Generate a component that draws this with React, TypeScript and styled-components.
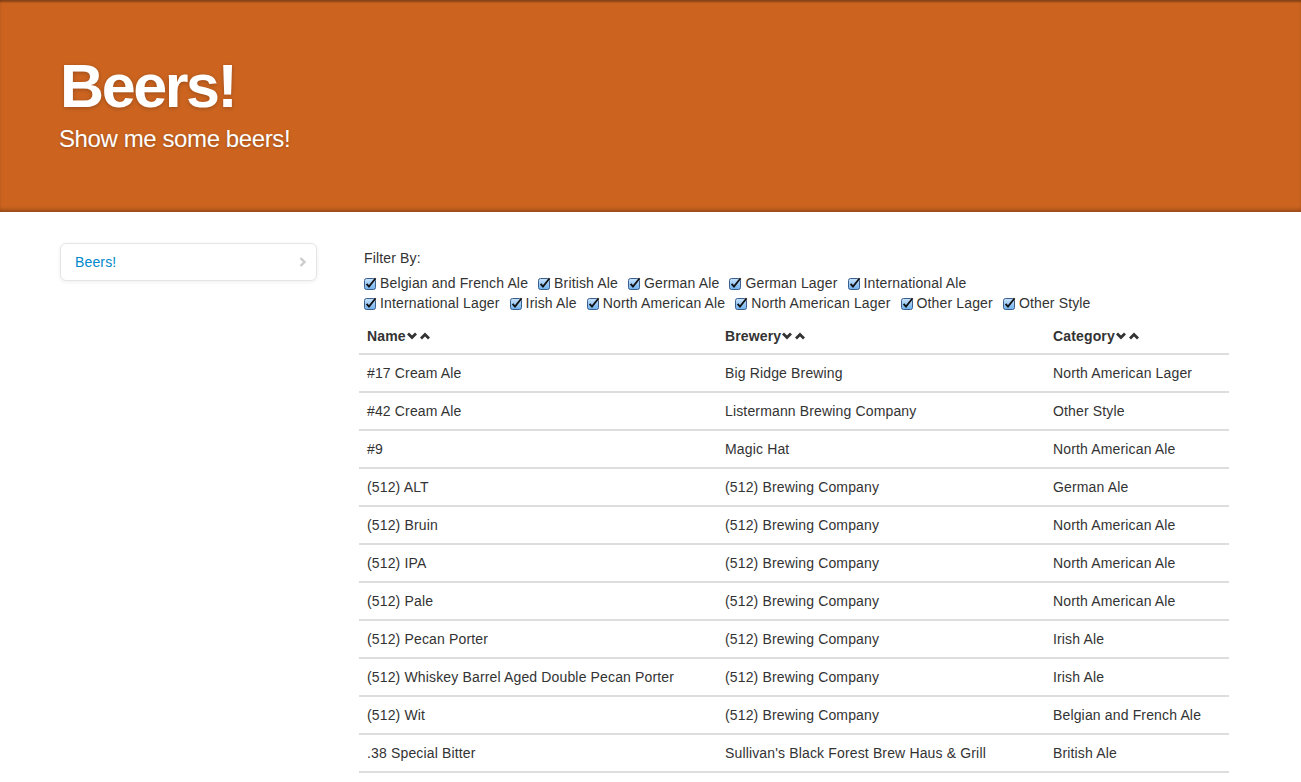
import styled, { createGlobalStyle } from "styled-components";

const GlobalStyle = createGlobalStyle`
  html, body {
    margin: 0;
    padding: 0;
    background: #fff;
  }
  body {
    font-family: "Liberation Sans", Arial, sans-serif;
    font-size: 14px;
    line-height: 20px;
    letter-spacing: 0.15px;
    color: #333;
  }
`;

const Hero = styled.header`
  height: 212px;
  box-sizing: border-box;
  background: #cc6420;
  box-shadow: inset 0 3px 2px -1px rgba(0, 0, 0, 0.35), inset 0 -4px 4px -2px rgba(0, 0, 0, 0.3);
  padding: 53px 60px 0;
  color: #fff;
`;

const HeroTitle = styled.h1`
  margin: 0;
  font-size: 61px;
  line-height: 66px;
  font-weight: bold;
  letter-spacing: -2.4px;
  text-shadow: 0 1px 4px rgba(0, 0, 0, 0.25);
`;

const HeroLead = styled.p`
  margin: 5px 0 0 -1px;
  font-size: 24px;
  line-height: 30px;
  letter-spacing: -0.4px;
  text-shadow: 0 1px 3px rgba(0, 0, 0, 0.25);
`;

const Layout = styled.main`
  display: grid;
  grid-template-columns: 257px 870px;
  column-gap: 42px;
  padding: 31px 60px 0;
`;

const NavList = styled.ul`
  list-style: none;
  margin: 0;
  padding: 0;
  background: #fff;
  border: 1px solid #e5e5e5;
  border-radius: 6px;
  box-shadow: 0 1px 4px rgba(0, 0, 0, 0.065);
  align-self: start;
`;

const NavItem = styled.li`
  display: flex;
  align-items: center;
  justify-content: space-between;
  padding: 8px 9px 8px 14px;
  color: #0088cc;
`;

const Content = styled.section`
  padding-top: 5px;
`;

const FilterTitle = styled.div`
  padding-left: 5px;
  margin-bottom: 5px;
`;

const FilterRow = styled.div`
  display: flex;
  padding-left: 5px;
`;

const FilterLabel = styled.label`
  display: inline-flex;
  align-items: center;
  margin-right: 10px;
  white-space: nowrap;
  svg {
    margin-right: 3px;
  }
`;

const Table = styled.table`
  width: 870px;
  margin-top: 6px;
  border-collapse: collapse;
  table-layout: fixed;
`;

const Th = styled.th<{ $w: number }>`
  width: ${(p) => p.$w}px;
  text-align: left;
  font-weight: bold;
  padding: 8px;
  line-height: 18px;
`;

const Td = styled.td`
  padding: 8px;
  border-top: 2px solid #dddddd;
  line-height: 20px;
`;

const LastRow = styled.tr`
  border-bottom: 2px solid #dddddd;
`;

const SortIcons = styled.span`
  display: inline-flex;
  gap: 3px;
  margin-left: 1px;
  vertical-align: 1px;
`;

const Checkbox = () => (
  <svg width="13" height="13" viewBox="0 0 13 13">
    <defs>
      <linearGradient id="cb" x1="0" y1="0" x2="0" y2="1">
        <stop offset="0" stopColor="#c9e3fb" />
        <stop offset="1" stopColor="#6fb1ee" />
      </linearGradient>
    </defs>
    <rect x="0.5" y="1.5" width="11" height="11" rx="2" fill="url(#cb)" stroke="#3b5f8c" />
    <path d="M2.6 6.8 L5 9.6 L11.6 1.2" fill="none" stroke="#111" strokeWidth="1.8" />
  </svg>
);

const Chevron = ({ up }: { up?: boolean }) => (
  <svg width="10" height="8" viewBox="0 0 10 8">
    <path
      d={up ? "M1 6.5 L5 2.5 L9 6.5" : "M1 1.5 L5 5.5 L9 1.5"}
      fill="none"
      stroke="#333"
      strokeWidth="2.8"
    />
  </svg>
);

const NavChevron = () => (
  <svg width="8" height="10" viewBox="0 0 8 10">
    <path d="M1.5 1 L5.5 5 L1.5 9" fill="none" stroke="#cccccc" strokeWidth="2.4" />
  </svg>
);

const filterRows = [
  ["Belgian and French Ale", "British Ale", "German Ale", "German Lager", "International Ale"],
  [
    "International Lager",
    "Irish Ale",
    "North American Ale",
    "North American Lager",
    "Other Lager",
    "Other Style",
  ],
];

const beers = [
  ["#17 Cream Ale", "Big Ridge Brewing", "North American Lager"],
  ["#42 Cream Ale", "Listermann Brewing Company", "Other Style"],
  ["#9", "Magic Hat", "North American Ale"],
  ["(512) ALT", "(512) Brewing Company", "German Ale"],
  ["(512) Bruin", "(512) Brewing Company", "North American Ale"],
  ["(512) IPA", "(512) Brewing Company", "North American Ale"],
  ["(512) Pale", "(512) Brewing Company", "North American Ale"],
  ["(512) Pecan Porter", "(512) Brewing Company", "Irish Ale"],
  ["(512) Whiskey Barrel Aged Double Pecan Porter", "(512) Brewing Company", "Irish Ale"],
  ["(512) Wit", "(512) Brewing Company", "Belgian and French Ale"],
  [".38 Special Bitter", "Sullivan's Black Forest Brew Haus & Grill", "British Ale"],
];

// content widths; each cell adds 16px of padding
const columns: [string, number][] = [
  ["Name", 342],
  ["Brewery", 312],
  ["Category", 168],
];

export default function App() {
  return (
    <>
      <GlobalStyle />
      <Hero>
        <HeroTitle>Beers!</HeroTitle>
        <HeroLead>Show me some beers!</HeroLead>
      </Hero>
      <Layout>
        <NavList>
          <NavItem>
            Beers!
            <NavChevron />
          </NavItem>
        </NavList>
        <Content>
          <FilterTitle>Filter By:</FilterTitle>
          {filterRows.map((row, i) => (
            <FilterRow key={i}>
              {row.map((f) => (
                <FilterLabel key={f}>
                  <Checkbox />
                  {f}
                </FilterLabel>
              ))}
            </FilterRow>
          ))}
          <Table>
            <thead>
              <tr>
                {columns.map(([name, w]) => (
                  <Th key={name} $w={w}>
                    {name}
                    <SortIcons>
                      <Chevron />
                      <Chevron up />
                    </SortIcons>
                  </Th>
                ))}
              </tr>
            </thead>
            <tbody>
              {beers.map((row, i) => {
                const cells = row.map((c, j) => <Td key={j}>{c}</Td>);
                return i === beers.length - 1 ? (
                  <LastRow key={i}>{cells}</LastRow>
                ) : (
                  <tr key={i}>{cells}</tr>
                );
              })}
            </tbody>
          </Table>
        </Content>
      </Layout>
    </>
  );
}
